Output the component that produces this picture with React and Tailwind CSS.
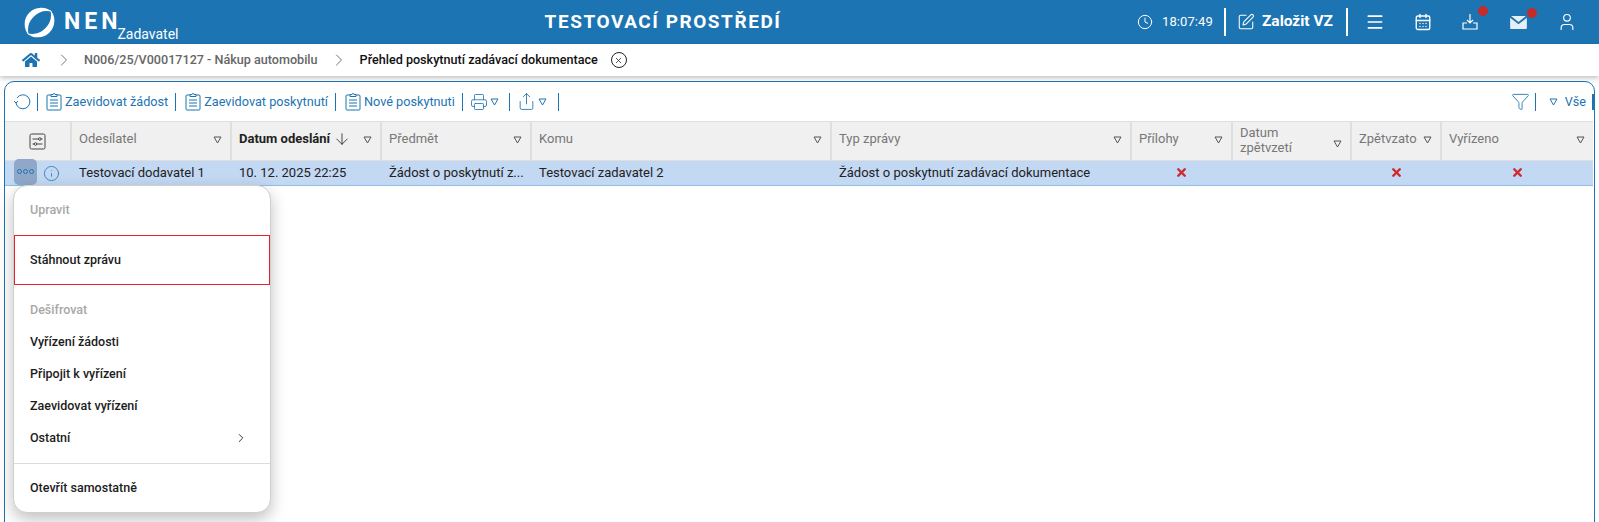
import { ArrowDown, CalendarDays, ChevronRight, Clock, Funnel, Info, Menu, Printer, Share, SquarePen, User, X } from 'lucide-react'
import { FaHome } from 'react-icons/fa'

function Tri({ className = 'text-[#555]' }) {
  return (
    <svg width="9" height="8" viewBox="0 0 9 8" className={`shrink-0 ${className}`}>
      <path d="M1 1h7L4.5 7z" fill="none" stroke="currentColor" strokeWidth="1" />
    </svg>
  )
}

function Logo() {
  return (
    <svg width="35" height="35" viewBox="0 0 36 36" className="shrink-0">
      <path d="M31 7A17 17 0 0 0 7 31A19.5 19.5 0 0 1 31 7z" fill="#fff" />
      <path d="M5 29A17 17 0 0 0 29 5A19.5 19.5 0 0 1 5 29z" fill="#fff" />
    </svg>
  )
}

function Sep() {
  return <div className="w-px h-[18px] bg-[#1d74b2] mx-[6px]" />
}

function ClipIcon() {
  return (
    <svg width="16" height="19" viewBox="0 0 16 19" fill="none" stroke="currentColor" strokeWidth="1" className="shrink-0">
      <path d="M5 3H2a1 1 0 00-1 1v13a1 1 0 001 1h12a1 1 0 001-1V4a1 1 0 00-1-1h-3" />
      <path d="M5 4.5V2.5h2a1 1 0 012 0h2v2z" />
      <path d="M4 8h8M4 11h8M4 14h8" />
    </svg>
  )
}

function ToolButton({ label }) {
  return (
    <div className="flex items-center gap-[3px] ml-[3px] mr-[1px]">
      <ClipIcon />
      <span>{label}</span>
    </div>
  )
}

const columns = [
  { label: 'Odesílatel', value: 'Testovací dodavatel 1' },
  { label: 'Datum odeslání', value: '10. 12. 2025 22:25', active: true },
  { label: 'Předmět', value: 'Žádost o poskytnutí z...' },
  { label: 'Komu', value: 'Testovací zadavatel 2' },
  { label: 'Typ zprávy', value: 'Žádost o poskytnutí zadávací dokumentace' },
  { label: 'Přílohy', cross: true },
  { label: 'Datum zpětvzetí', wrap: true },
  { label: 'Zpětvzato', cross: true },
  { label: 'Vyřízeno', cross: true },
]

function MenuItem({ children, disabled }) {
  return (
    <div className={`h-8 px-4 flex items-center justify-between font-medium ${disabled ? 'text-[#a8a8a8]' : 'text-[#1c1c1c]'}`}>
      {children}
    </div>
  )
}

export default function App() {
  return (
    <div className="h-[522px] overflow-hidden bg-white relative font-['Roboto',sans-serif]">
      <header className="h-11 bg-[#1d74b2] text-white flex items-center">
        <div className="w-[533px] shrink-0 pl-[22px] flex items-center">
          <Logo />
          <span className="ml-[7px] text-[23px] leading-none font-bold tracking-[4px] -mt-0.5">NEN</span>
          <span className="text-[14px] leading-none self-end -mb-[1px] -ml-[4px]">Zadavatel</span>
        </div>
        <div className="w-[260px] shrink-0 text-center text-[19px] font-bold tracking-[1.55px] whitespace-nowrap">TESTOVACÍ PROSTŘEDÍ</div>
        <div className="flex-1" />
        <div className="flex items-center text-[13px] pr-[22px]">
          <Clock size={16} strokeWidth={1.5} />
          <span className="ml-[9px] tracking-[0.1px]">18:07:49</span>
          <div className="w-[2px] h-7 bg-white mx-[11px]" />
          <SquarePen size={18} strokeWidth={1.4} />
          <span className="ml-[7px] text-[15.5px] font-bold">Založit VZ</span>
          <div className="w-[2px] h-7 bg-white ml-[13px] mr-[17px]" />
          <Menu size={20} strokeWidth={2} />
          <CalendarDays size={18} strokeWidth={1.8} className="ml-[29px]" />
          <div className="relative ml-[29px]">
            <svg width="18" height="18" viewBox="0 0 18 18" fill="none" stroke="currentColor" strokeWidth="1.2">
              <path d="M9 1v9M6 7l3 3 3-3M6 10H2v6h14v-6h-4" />
            </svg>
            <span className="absolute -top-[7px] left-[17px] w-[10px] h-[10px] rounded-full bg-[#c62b2b]" />
          </div>
          <div className="relative ml-[31px]">
            <svg width="17" height="13" viewBox="0 0 18 14">
              <path d="M1 0h16L9 6.5zM0 2l9 7 9-7v11a1 1 0 01-1 1H1a1 1 0 01-1-1z" fill="#e6eff6" />
            </svg>
            <span className="absolute -top-[8px] left-[17px] w-[10px] h-[10px] rounded-full bg-[#c62b2b]" />
          </div>
          <User size={20} strokeWidth={1.4} className="ml-[30px]" />
        </div>
      </header>

      <nav className="h-[32px] bg-white shadow-[0_2px_5px_rgba(0,0,0,0.25)] relative flex items-center pl-[22px] text-[12.6px] font-medium">
        <FaHome size={18} className="text-[#1d74b2]" />
        <ChevronRight size={20} strokeWidth={1} className="ml-[14px] text-[#555]" />
        <span className="ml-[10px] text-[#666]">N006/25/V00017127 - Nákup automobilu</span>
        <ChevronRight size={20} strokeWidth={1} className="ml-[11px] text-[#555]" />
        <span className="ml-[11px] text-[#111]">Přehled poskytnutí zadávací dokumentace</span>
        <span className="ml-[13px] w-4 h-4 rounded-full border border-[#222] flex items-center justify-center">
          <X size={9} strokeWidth={2} className="text-[#222]" />
        </span>
      </nav>

      <main className="mt-[5px] mx-[4px] h-[500px] border border-[#1d74b2] rounded-t-[10px] bg-white">
        <div className="h-[39px] pl-[9px] pr-0 flex items-center text-[#1d74b2] text-[12.7px]">
          <svg width="17" height="17" viewBox="0 0 17 17" fill="none" stroke="currentColor" strokeWidth="1" className="shrink-0">
            <path d="M3 5a7 7 0 11-1 5" />
            <path d="M0 8l2 2 2-2" />
          </svg>
          <Sep />
          <div className="-ml-[1px] flex items-center">
            <ToolButton label="Zaevidovat žádost" />
          </div>
          <Sep />
          <ToolButton label="Zaevidovat poskytnutí" />
          <Sep />
          <ToolButton label="Nové poskytnuti" />
          <Sep />
          <Printer size={18} strokeWidth={1.1} className="ml-[1px]" />
          <Tri className="ml-[2px] text-[#1d74b2]" />
          <div className="ml-[4px]"><Sep /></div>
          <Share size={19} strokeWidth={1.1} className="ml-[1px]" />
          <Tri className="ml-[2px] text-[#1d74b2]" />
          <div className="ml-[5px]"><Sep /></div>
          <div className="flex-1" />
          <Funnel size={19} strokeWidth={1.1} />
          <div className="-ml-[1px] mr-[2px]"><Sep /></div>
          <Tri className="ml-[5px] text-[#1d74b2]" />
          <span className="ml-[7px] mr-[6px]">Vše</span>
          <div className="w-[2px] h-[16px] bg-[#1d74b2]" />
        </div>

        <div className="grid grid-cols-[65px_160px_150px_150px_300px_300px_101px_119px_90px_153px] text-[13px]">
          <div className="h-10 bg-[#f0f0f0] border-y border-[#dedede] flex items-center justify-center">
            <svg width="17" height="17" viewBox="0 0 17 17" fill="none" stroke="#444" strokeWidth="1">
              <rect x="1" y="1" width="15" height="15" rx="1.5" />
              <path d="M3.5 6h6M12 6h1.5M3.5 11h1.5M8 11h5.5" />
              <circle cx="10.8" cy="6" r="1.3" />
              <circle cx="6.5" cy="11" r="1.3" />
            </svg>
          </div>
          {columns.map((col) => (
            <div key={col.label} className="h-10 bg-[#f0f0f0] border-y border-l-2 border-[#dedede] pl-[7px] pr-[8px] flex items-center justify-between">
              <span className={`${col.wrap ? 'w-[70px] leading-[15px] -mt-[2px]' : 'leading-[14px] -mt-[4px]'} ${col.active ? 'font-bold text-[#222] flex items-center gap-[3px]' : 'text-[#777]'}`}>
                {col.label}
                {col.active && <ArrowDown size={18} strokeWidth={1.1} />}
              </span>
              <Tri className={`text-[#555] ${col.wrap ? 'mt-[5px]' : '-mt-[3px]'}`} />
            </div>
          ))}

          <div className="h-[25px] bg-[#c2d8f3] border-b border-[#8fbce8] flex items-center pl-[9px] relative">
            <div className="w-[23px] h-[26px] -mt-[3px] rounded-[5px] bg-[#8fa8c9] flex items-center justify-center gap-[1px]">
              <span className="w-[5px] h-[5px] rounded-full border border-[#1d74b2]" />
              <span className="w-[5px] h-[5px] rounded-full border border-[#1d74b2]" />
              <span className="w-[5px] h-[5px] rounded-full border border-[#1d74b2]" />
            </div>
            <Info size={17} strokeWidth={1.1} className="ml-[6px] text-[#1d74b2]" />
          </div>
          {columns.map((col) => (
            <div key={col.label} className={`h-[25px] bg-[#c2d8f3] border-b border-[#8fbce8] px-[9px] flex items-center text-[#222] whitespace-nowrap ${col.cross ? 'justify-center' : ''}`}>
              {col.cross ? <X size={13} strokeWidth={4.5} className="text-[#cc2b2b] -mt-[2px] ml-[2px]" /> : col.value}
            </div>
          ))}
        </div>
      </main>

      <div className="absolute left-[13px] top-[185px] w-[258px] h-[328px] bg-white border border-[#cfcfcf] rounded-[14px] shadow-[0_6px_16px_rgba(0,0,0,0.25)] text-[12.5px] flex flex-col">
        <div className="pt-2"><MenuItem disabled>Upravit</MenuItem></div>
        <div className="mt-[9px] h-[50px] border border-[#e8202a] px-[15px] flex items-center font-medium text-[#1c1c1c]">Stáhnout zprávu</div>
        <div className="mt-[9px]"><MenuItem disabled>Dešifrovat</MenuItem></div>
        <MenuItem>Vyřízení žádosti</MenuItem>
        <MenuItem>Připojit k vyřízení</MenuItem>
        <MenuItem>Zaevidovat vyřízení</MenuItem>
        <MenuItem>
          Ostatní
          <ChevronRight size={14} strokeWidth={1.5} className="mr-[6px]" />
        </MenuItem>
        <div className="mt-[9px] border-t border-[#dcdcdc]" />
        <div className="mt-2"><MenuItem>Otevřít samostatně</MenuItem></div>
      </div>
    </div>
  )
}
